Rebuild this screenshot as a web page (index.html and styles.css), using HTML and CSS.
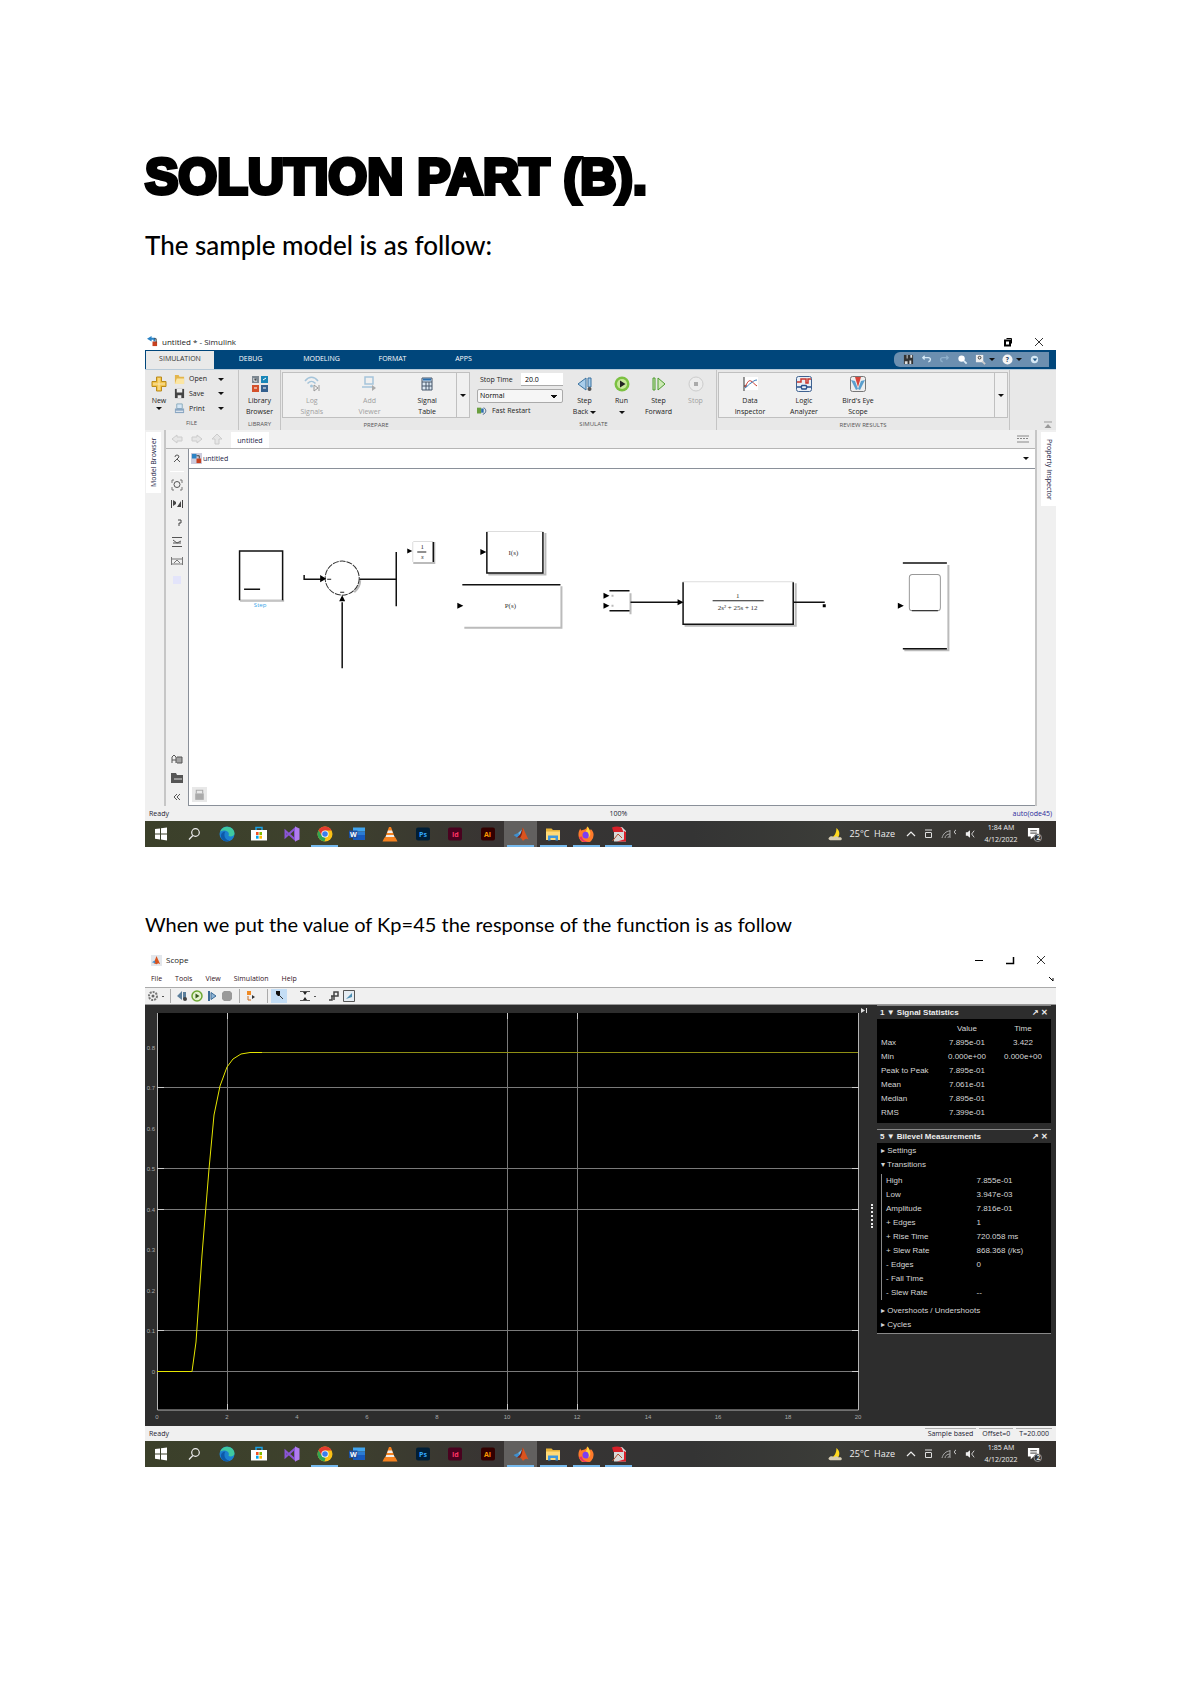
FILE: index.html
```html
<!DOCTYPE html>
<html lang="en">
<head>
    <meta charset="utf-8">
    <title>Solution Part (B)</title>
    <link rel="stylesheet" href="styles.css">
</head>
<body>
    <!-- taskbar icons, shared by both windows -->
    <svg class="sprite" aria-hidden="true">
        <symbol id="i-start" viewBox="0 0 16 16"><path fill="#fff" d="M2 3l5-.6v5H2zM8 2.3l6-.8v6H8zM2 8.4h5v5L2 12.800zM8 8.400h6v6l-6-.8z"/></symbol>
        <symbol id="i-search" viewBox="0 0 16 16"><g fill="none" stroke="#eee" stroke-width="1.200"><circle cx="9.500" cy="6.500" r="3.800"/><path d="M6.800 9.500L3 13.500"/></g></symbol>
        <symbol id="i-edge" viewBox="0 0 16 16"><circle cx="8" cy="8" r="7.500" fill="#1b7fd0"/><path fill="#3fc9a0" d="M1 6C2.500 1.500 7-.2 11 1.300c3.500 1.300 5 5 4.300 7.200C14.500 10.500 11 11 9.500 9.800 11 6.500 8 4.500 5.500 4.500 3.500 4.500 2 5 1 6z"/><path fill="#0e5aa8" d="M5.500 8c-.5 3 1.500 6 5 6.500C6 17 1.500 13.500 2 9c.5-2 2-3.500 4.500-3.500C6 6 5.600 7 5.500 8z"/></symbol>
        <symbol id="i-store" viewBox="0 0 16 16"><path fill="none" stroke="#1ba1e2" stroke-width="1.500" d="M5 4V1.500h6V4"/><path fill="#fff" d="M0 4h16v10.500H0z"/><path fill="#f25022" d="M5 6h2.600v3H5z"/><path fill="#7fba00" d="M8.400 6H11v3H8.400z"/><path fill="#00a4ef" d="M5 9.700h2.600v3H5z"/><path fill="#ffb900" d="M8.400 9.700H11v3H8.400z"/></symbol>
        <symbol id="i-vs" viewBox="0 0 16 16"><path fill="none" stroke="#8a55d6" stroke-width="2" d="M1.500 5v6L11 2.500v11z"/><path fill="#b07cf0" d="M11 .5l4.500 2v11l-4.500 2z"/></symbol>
        <symbol id="i-chrome" viewBox="0 0 16 16"><circle cx="8" cy="8" r="7.500" fill="#fbc116"/><path fill="#e33b2e" d="M1.500 4.300A7.500 7.500 0 0 1 14.600 4.500L8 4.600 4.800 9.500z"/><path fill="#31a552" d="M1.500 4.300L5 10l3.500 2L7.500 15.500A7.500 7.500 0 0 1 1.500 4.300z"/><circle cx="8" cy="8" r="3.600" fill="#fff"/><circle cx="8" cy="8" r="2.800" fill="#3b7ded"/></symbol>
        <symbol id="i-word" viewBox="0 0 16 16"><path fill="#41a5ee" d="M4 1.500h12v4H4z"/><path fill="#2b7cd3" d="M4 5.500h12v3.500H4z"/><path fill="#185abd" d="M4 9h12v5H4z"/><path fill="#1c4f9f" d="M0 4.500h8.500v7.500H0z"/><text x="1" y="10.500" class="glyph" fill="#fff">W</text></symbol>
        <symbol id="i-vlc" viewBox="0 0 16 16"><path fill="#f58220" d="M7 1h2l4 11H3z"/><path fill="#eee" d="M6 4.500h4l.9 2.500H5.100zM4.300 9h7.400l.8 2H3.600z"/><path fill="#f58220" d="M2.500 11.500h11l2 4H.5z"/></symbol>
        <symbol id="i-ps" viewBox="0 0 16 16"><rect x="1" y="1.500" width="14" height="13" rx="2" fill="#001e36"/><text x="4" y="11" class="glyph" fill="#31a8ff">Ps</text></symbol>
        <symbol id="i-id" viewBox="0 0 16 16"><rect x="1" y="1.500" width="14" height="13" rx="2" fill="#49021f"/><text x="5" y="11" class="glyph" fill="#ff3366">Id</text></symbol>
        <symbol id="i-ai" viewBox="0 0 16 16"><rect x="1" y="1.500" width="14" height="13" rx="2" fill="#330000"/><text x="4" y="11" class="glyph" fill="#ff9a00">Ai</text></symbol>
        <symbol id="i-matlab" viewBox="0 0 16 16"><path fill="#3f8fcf" d="M.5 9l4.500-2 2 2.500-3 2z"/><path fill="#6fb8e8" d="M5 7l4-3.500-2 6z"/><path fill="#d9531e" d="M9.500 1.500C11.500 4 13.500 10 15.500 13.500c-2-1.500-3.500-1-5.500 1.500-1-2-2-3-3-3.500 1.500-3 2-6 2.500-10z"/><path fill="#7e1f10" d="M9.500 1.500C9 6 7.500 9 4 11.500l3 .3C9 9.500 9.500 6 9.500 1.500z"/></symbol>
        <symbol id="i-folder" viewBox="0 0 16 16"><path fill="#e8b33a" d="M1 2.500h5.500L8 4h7v10H1z"/><path fill="#ffd978" d="M1 5.500h14V14H1z"/><path fill="#3f97dd" d="M3 9.500h10V14.500h-2.500V12h-5v2.500H3z"/></symbol>
        <symbol id="i-firefox" viewBox="0 0 16 16"><path fill="#ff7a2b" d="M9 .5c2 1.500 2.500 3 2.700 4 .8-.3 1-.9 1-1.500C15 5 15.800 7 15.500 9.500a7.500 7.500 0 0 1-15 0C.3 6.500 1 4.500 2.500 2.500c0 1 .3 1.500.8 2C5 3.500 8.500 4 9 .5z"/><circle cx="8" cy="9" r="3.500" fill="#7b3ff2"/><path fill="#ffd43c" d="M9 .5c2 1.500 2.500 3 2.700 4C13 8 12 11 10 12c2-3 0-6.500-2.500-6.500C9 4 9.500 2.500 9 .5z"/><path fill="#e8336b" d="M1 11c1.500 4 5.500 6 9.500 4.500C7 15.500 4.500 14 4 10.500z"/></symbol>
        <symbol id="i-pdf" viewBox="0 0 16 16"><path fill="#d9d9d9" d="M3 1h8l4 4v10.500H3z"/><path fill="#d8202a" d="M1 1.500q5-2 9.500 0l2 4.500H2.500zM13 5l2 1v9.500H6l7-2z"/><path fill="none" stroke="#b5502d" d="M1.500 15L7 8l4 4"/></symbol>
        <symbol id="i-moon" viewBox="0 0 16 16"><path fill="#ffd91f" d="M9 1c4 3 4 8 1 11H2C7 10.500 9 6 9 1z"/><path fill="#d6ccb2" d="M1 11.500C3 9 5 10 6 11c2-2 4-1 5 0h2c2 0 2.500 3 .5 3H2.500C.5 14 0 12 1 11.500z"/></symbol>
        <symbol id="i-up" viewBox="0 0 10 10"><path fill="none" stroke="#eee" stroke-width="1.200" d="M1 7l4-4 4 4"/></symbol>
        <symbol id="i-meet" viewBox="0 0 10 10"><path fill="none" stroke="#ddd" d="M2 1h7M8.500 4v4.500h-6V3.500h6"/></symbol>
        <symbol id="i-wifi" viewBox="0 0 16 10"><path fill="none" stroke="#aaa" d="M1 9C2 5 5 2 9 2M4 9c0-2 2-4 5-4M7 9c0-1 1-2 2-2M9 1v8"/><path fill="none" stroke="#eee" d="M15 1c-2 1-2 3 0 4"/></symbol>
        <symbol id="i-sound" viewBox="0 0 12 10"><path fill="#eee" d="M1 3h2l3-2.500v9L3 7H1z"/><path fill="none" stroke="#eee" d="M11 1L8 5l3 4"/></symbol>
        <symbol id="i-note" viewBox="0 0 16 16"><path fill="#fff" d="M1 1h12v9H7l-3 3v-3H1z"/><path stroke="#333" d="M3.500 4h7M3.500 6.500h7"/><circle cx="11.500" cy="11.500" r="4" fill="#333" stroke="#999"/><text x="10" y="14" class="glyph" fill="#ddd">2</text></symbol>
    </svg>

    <main class="page">
        <h1>SOLUTION PART (B).</h1>
        <p class="lead">The sample model is as follow:</p>

        <section class="window model">
            <header class="titlebar">
                <svg class="icon12" viewBox="0 0 12 12"><path fill="#2b84c6" d="M0 3l5-3v2h4v4H7V4H5v2z"/><path fill="#c8401e" d="M6 6h5v5H6z"/><path fill="none" stroke="#333" d="M8 3h2v4"/></svg>
                <span>untitled * - Simulink</span>
                <span class="winbtns">
                    <button aria-label="Restore"><svg viewBox="0 0 10 10"><path fill="none" stroke="#000" stroke-width="2" d="M2 3.500h5v5H2z"/><path fill="none" stroke="#000" d="M3.500 1.500h5v5"/></svg></button>
                    <button aria-label="Close"><svg viewBox="0 0 10 10"><path stroke="#333" d="M1 1l8 8M9 1L1 9"/></svg></button>
                </span>
            </header>

            <nav class="tabs">
                <a href="#" class="active">SIMULATION</a>
                <a href="#">DEBUG</a>
                <a href="#">MODELING</a>
                <a href="#">FORMAT</a>
                <a href="#">APPS</a>
                <span class="quick">
                    <svg viewBox="0 0 12 12"><path fill="#333" d="M1 1h10v10H1z"/><path fill="#ddd" d="M4 1h1v4H4zM8 1h2v3H8zM2 8h3v3H2zM7 7h2v4H7z"/></svg>
                    <svg viewBox="0 0 12 12"><path fill="none" stroke="#d5e8f5" stroke-width="1.500" d="M4 2L2 4l2 2M2 4h6c3 0 3 4 0 4.500"/></svg>
                    <svg viewBox="0 0 12 12"><path fill="none" stroke="#8fb0cc" stroke-width="1.500" d="M8 2l2 2-2 2M10 4H4C1 4 1 8 4 8.500"/></svg>
                    <svg viewBox="0 0 12 12"><circle cx="5" cy="5" r="3.500" fill="#fff"/><path stroke="#dcebf5" stroke-width="2" d="M7.500 7.500l3 3"/></svg>
                    <svg viewBox="0 0 12 12"><path fill="#eee" d="M1 1h8v8H1z"/><circle cx="5" cy="4" r="1.500" fill="none" stroke="#333"/><path stroke="#ccc" stroke-width="2" d="M8 8l3 3"/></svg>
                    <i class="caret"></i>
                    <svg viewBox="0 0 12 12"><circle cx="6" cy="6" r="5.500" fill="#f5f5f5"/><text x="4" y="9" class="glyph" fill="#235">?</text></svg>
                    <i class="caret"></i>
                    <svg viewBox="0 0 12 12"><circle cx="6" cy="6" r="4" fill="#d5e8f5"/><path fill="#1d5484" d="M4 5h5L6.500 8z"/></svg>
                </span>
            </nav>

            <div class="ribbon">
                <div class="group file">
                    <div class="tools">
                        <button class="tool"><svg viewBox="0 0 16 16"><path fill="#f3c54b" stroke="#b98a1c" d="M5.500 1h5v4.500H15v5h-4.500V15h-5v-4.500H1v-5h4.500z"/><path stroke="#fff" d="M8 2v12M2 8h12" opacity=".6"/></svg>New<i class="caret"></i></button>
                        <div class="list">
                            <button><svg viewBox="0 0 12 12"><path fill="#e3b54c" d="M1 1h4l1 2h5v8H1z"/><path fill="#fbe6a4" d="M3 5h8v6H1z"/></svg>Open<i class="caret"></i></button>
                            <button><svg viewBox="0 0 12 12"><path fill="#444" d="M1 1h10v10H1z"/><path fill="#eee" d="M3 1h6v4H3zM4 8h4v3H4z"/></svg>Save<i class="caret"></i></button>
                            <button><svg viewBox="0 0 12 12"><path fill="#d5e6f5" stroke="#8ab" d="M3 1h6v5H3z"/><path fill="#8aa6c2" d="M1 6h10v5H1z"/><path stroke="#fff" d="M2 9h8"/></svg>Print<i class="caret"></i></button>
                        </div>
                    </div>
                    <small>FILE</small>
                </div>
                <div class="group library">
                    <div class="tools">
                        <button class="tool"><svg viewBox="0 0 16 16"><path fill="#7d8891" d="M0 0h7v7H0z"/><path fill="#1886b8" d="M9 0h7v7H9z"/><path fill="#d4502a" d="M0 9h7v7H0z"/><path fill="#35618f" d="M9 9h7v7H9z"/><path stroke="#fff" d="M2 2v3h3M2 12h3M11 12h3M11 4l3-2"/></svg>Library<br>Browser</button>
                    </div>
                    <small>LIBRARY</small>
                </div>
                <div class="group prepare">
                    <div class="tools gallery">
                        <button class="tool off"><svg viewBox="0 0 16 16"><path fill="none" stroke="#a5c4da" stroke-width="1.500" d="M1 5c4-5 9-5 13 0M3.500 7.500c3-3 5-3 8 0"/><circle cx="7.500" cy="10" r="1.500" fill="#a5c4da"/><path stroke="#999" fill="none" d="M10 9v6l4-3-4-3M15 9v6"/></svg>Log<br>Signals</button>
                        <button class="tool off"><svg viewBox="0 0 16 16"><path fill="none" stroke="#a5c4da" stroke-width="1.500" d="M3 1h8v7H3zM0 11h10"/><path fill="#aaa" d="M10 9v6l4-3z"/></svg>Add<br>Viewer</button>
                        <button class="tool"><svg viewBox="0 0 16 16"><path fill="#dbe7f1" stroke="#46566a" d="M3 2h10v12H3z"/><path stroke="#46566a" d="M3 6h10M3 10h10M7 6v8M10 6v8"/><path stroke="#2b6fae" stroke-width="2" d="M4 3.500h8"/></svg>Signal<br>Table</button>
                        <button class="more" aria-label="More"><i class="caret"></i></button>
                    </div>
                    <small>PREPARE</small>
                </div>
                <div class="group simulate">
                    <div class="tools">
                        <div class="fields">
                            <label>Stop Time <input type="text" value="20.0"></label>
                            <select aria-label="Simulation mode"><option>Normal</option></select>
                            <button class="fast"><svg viewBox="0 0 12 12"><path fill="#6a9f3f" d="M0 2h5v7H0z"/><path fill="#2b6fae" d="M5 3h3v5H5z"/><path fill="none" stroke="#2b4f7a" d="M8 2c4 2 3 7-1 8"/></svg>Fast Restart</button>
                        </div>
                        <button class="tool"><svg viewBox="0 0 16 16"><path fill="#a9cdea" stroke="#39719f" d="M9 2v12L1 8zM11 2h3v9h-3z"/><circle cx="12.500" cy="13" r="2" fill="#555"/></svg>Step<br>Back <i class="caret"></i></button>
                        <button class="tool"><svg viewBox="0 0 16 16"><circle cx="8" cy="8" r="7.500" fill="#7cc142"/><circle cx="8" cy="8" r="5" fill="#c8e89a"/><path fill="#222" d="M6 4.500v7L11.500 8z"/></svg>Run<br><i class="caret"></i></button>
                        <button class="tool"><svg viewBox="0 0 16 16"><path fill="#cdeab5" stroke="#4d9a2f" d="M2 2h2v12H2zM7 2l7 6-7 6z"/></svg>Step<br>Forward</button>
                        <button class="tool off"><svg viewBox="0 0 16 16"><circle cx="8" cy="8" r="7" fill="#ececec" stroke="#ccc"/><path fill="#aaa" d="M6 6h4v4H6z"/></svg>Stop</button>
                    </div>
                    <small>SIMULATE</small>
                </div>
                <div class="group review">
                    <div class="tools gallery">
                        <button class="tool"><svg viewBox="0 0 16 16"><path fill="#fff" d="M2 1h14v13H2z"/><path fill="none" stroke="#333" d="M2 1v14M2 10h3"/><path fill="none" stroke="#c9372c" d="M3 11c3-6 4-7 6-6s3 3 6 5"/><path fill="none" stroke="#3478b8" d="M3 12c3-2 4-4 6-5s3-3 6-3"/></svg>Data<br>Inspector</button>
                        <button class="tool"><svg viewBox="0 0 16 16"><rect x=".5" y=".5" width="15" height="15" rx="2" fill="#e9eff6" stroke="#3f6290"/><path fill="none" stroke="#c9372c" stroke-width="1.500" d="M1 6h4V3h5v4h2V3h3"/><path fill="none" stroke="#27508c" stroke-width="1.500" d="M1 11h4l1-1.500h4l1 1.500h4M5 11l1 2h4l1-2"/></svg>Logic<br>Analyzer</button>
                        <button class="tool"><svg viewBox="0 0 16 16"><rect x=".5" y=".5" width="15" height="15" rx="2" fill="#eee" stroke="#777"/><path fill="#5a9fce" d="M1 4l4 1 3 8-2 1z"/><path fill="#5a9fce" d="M15 4l-4 1-3 8 2 1z"/><path fill="#d8453a" d="M5 1h6L8 11z"/></svg>Bird's Eye<br>Scope</button>
                        <button class="more" aria-label="More"><i class="caret"></i></button>
                    </div>
                    <small>REVIEW RESULTS</small>
                </div>
                <div class="collapse"><svg viewBox="0 0 8 8"><path stroke="#999" d="M0 1h8"/><path fill="#999" d="M4 3l3.500 4h-7z"/></svg></div>
            </div>

            <div class="workspace">
                <aside class="side"><button>Model Browser</button></aside>
                <div class="editor">
                    <div class="doctabs">
                        <svg viewBox="0 0 12 12"><path class="nav" d="M1 6l5-4v2h5v4H6v2z"/></svg>
                        <svg viewBox="0 0 12 12"><path class="nav" d="M11 6L6 2v2H1v4h5v2z"/></svg>
                        <svg viewBox="0 0 12 12"><path class="nav" d="M6 1l5 5H8v5H4V6H1z"/></svg>
                        <a href="#">untitled</a>
                        <svg class="keys" viewBox="0 0 12 12"><path fill="none" stroke="#888" d="M0 3h12M0 9h12"/><path stroke="#888" stroke-dasharray="2 1" d="M0 5.500h12"/></svg>
                    </div>
                    <div class="columns">
                        <div class="palette">
                            <svg viewBox="0 0 12 12"><path fill="none" stroke="#555" d="M4 5a2 2 0 1 1 4 0L6 7M3 10l3-3 3 3"/></svg>
                            <hr>
                            <svg viewBox="0 0 12 12"><path fill="none" stroke="#777" d="M1 4V1h2M11 4V1H9M1 8v3h2M11 8v3H9"/><circle cx="6" cy="5.500" r="3" fill="none" stroke="#555"/></svg>
                            <svg viewBox="0 0 12 12"><path fill="#444" d="M0 2h1v8H0zM11 2h1v8h-1zM2 2l3 2v2L2 8zM10 3v6H6z"/></svg>
                            <svg viewBox="0 0 12 12"><path fill="none" stroke="#444" d="M7 3h3v3H8v3"/></svg>
                            <svg viewBox="0 0 12 12"><path fill="none" stroke="#555" d="M1 1.500h10M1 10.500h10M2 4l4 3 4-2M2 7h8"/></svg>
                            <svg viewBox="0 0 12 12"><path fill="none" stroke="#777" d="M.5 2v8M11.500 2v8M1 4h10M1 9h10M3 8l3-3 3 3"/></svg>
                            <svg viewBox="0 0 12 12"><path fill="#e3e4fa" d="M2 2h8v8H2z"/></svg>
                            <svg class="bottom" viewBox="0 0 12 12"><path fill="none" stroke="#555" d="M1 10V4l2-2 2 2v6M1 7h4M6 4h5v6H6zM8 4v6M10 4v6"/></svg>
                            <svg viewBox="0 0 12 12"><path fill="#555" d="M0 1h5l1 2h6v8H0z"/><path stroke="#ddd" d="M3 7h8"/></svg>
                            <svg viewBox="0 0 12 12"><path fill="none" stroke="#555" d="M6 3L3 6l3 3M9 3L6 6l3 3"/></svg>
                        </div>
                        <div class="sheet">
                            <div class="crumb">
                                <svg class="icon12" viewBox="0 0 12 12"><path fill="#ccd" d="M0 0h12v12H0z"/><path fill="#2b84c6" d="M1 1h5v5H1z"/><path fill="#c8401e" d="M6 6h5v5H6z"/><path fill="none" stroke="#333" d="M6 3h3v3"/></svg>
                                <span>untitled</span>
                                <i class="caret"></i>
                            </div>
                            <!-- block diagram -->
                            <svg class="diagram" viewBox="189 469 845 336">
                                <g class="shade">
                                    <path d="M240 600.500h44M413 563h21V542M488 574.500h57V533M464 627.500h97V586M631 613h-1V593M684 625.500h111V583M947.500 565v85h-44"/>
                                    <path d="M354 592q6-5 6-12"/>
                                </g>
                                <g class="faint"><path d="M413 541.500h20M412.500 542v20M486 531.500h57M682 581.500h111M239 599.500h44"/></g>
                                <g class="wire">
                                    <path d="M239.500 600v-49h43v49M244 589h16"/>
                                    <path d="M304 575v4h20M359 579h37M396 552v54M342 602v66"/>
                                    <path d="M433 542v20M486.500 532v41h56v-41M462 584.500h98"/>
                                    <path d="M609 590.500h20M609 610.500h20M630 602h50"/>
                                    <path d="M682.500 582v42h110v-42M793 602h31M902 563h44M902 648.500h44"/>
                                </g>
                                <circle class="sum" cx="342" cy="578" r="17"/>
                                <path class="head" d="M320 575l6 3.500-6 3.500zM339 601l3-6 3 6zM407 548.500l5 2.500-5 2.500zM480 549l6 3-6 3zM457 602.500l6 3-6 3zM603 592.500l6 3-6 3zM603 602.500l6 3-6 3zM677 599l6 3-6 3zM897 602.500l6 3-6 3zM822 604h3v3h-3z"/>
                                <path class="thin" d="M327 579h4M340 592h4M417 552h9M712 600.500h51"/>
                                <path class="shade" d="M611 595.500h2M611 605.500h2"/>
                                <rect class="screen" x="908.500" y="574.500" width="31" height="36" rx="3"/>
                                <path class="thin" d="M911 610.500h26"/>
                                <text x="260" y="607" class="blue">Step</text>
                                <text x="422" y="549">1</text>
                                <text x="422" y="559" class="it">s</text>
                                <text x="513" y="555">I(s)</text>
                                <text x="510" y="608">P(s)</text>
                                <text x="737" y="598">1</text>
                                <text x="737" y="610">2s² + 25s + 12</text>
                            </svg>
                            <svg class="lock" viewBox="0 0 14 14"><path fill="#e8e8e8" d="M0 0h14v14H0z"/><path fill="#aaa" d="M3 6h8v6H3z"/><path fill="none" stroke="#aaa" d="M4 6V3h6v3"/></svg>
                        </div>
                    </div>
                </div>
                <aside class="side right"><button>Property Inspector</button></aside>
            </div>

            <footer class="status">
                <span class="state">Ready</span>
                <span>100%</span>
                <a href="#">auto(ode45)</a>
            </footer>

            <div class="taskbar">
                <div class="apps">
                    <button aria-label="Start"><svg><use href="#i-start"/></svg></button>
                    <button aria-label="Search"><svg><use href="#i-search"/></svg></button>
                    <button aria-label="Edge"><svg><use href="#i-edge"/></svg></button>
                    <button aria-label="Store"><svg><use href="#i-store"/></svg></button>
                    <button aria-label="Visual Studio"><svg><use href="#i-vs"/></svg></button>
                    <button aria-label="Chrome" class="open"><svg><use href="#i-chrome"/></svg></button>
                    <button aria-label="Word"><svg><use href="#i-word"/></svg></button>
                    <button aria-label="VLC"><svg><use href="#i-vlc"/></svg></button>
                    <button aria-label="Photoshop"><svg><use href="#i-ps"/></svg></button>
                    <button aria-label="InDesign"><svg><use href="#i-id"/></svg></button>
                    <button aria-label="Illustrator"><svg><use href="#i-ai"/></svg></button>
                    <button aria-label="MATLAB" class="open current"><svg><use href="#i-matlab"/></svg></button>
                    <button aria-label="Explorer" class="open"><svg><use href="#i-folder"/></svg></button>
                    <button aria-label="Firefox" class="open"><svg><use href="#i-firefox"/></svg></button>
                    <button aria-label="PDF reader" class="open"><svg><use href="#i-pdf"/></svg></button>
                </div>
                <div class="tray">
                    <svg class="big"><use href="#i-moon"/></svg>
                    <span class="weather">25°C&nbsp; Haze</span>
                    <svg><use href="#i-up"/></svg>
                    <svg><use href="#i-meet"/></svg>
                    <svg class="wide"><use href="#i-wifi"/></svg>
                    <svg><use href="#i-sound"/></svg>
                    <span class="clock">1:84 AM<br>4/12/2022</span>
                    <svg class="big"><use href="#i-note"/></svg>
                </div>
            </div>
        </section>

        <p class="note">When we put the value of Kp=45 the response of the function is as follow</p>

        <section class="window scope">
            <header class="titlebar">
                <svg class="icon12" viewBox="0 0 12 12"><path fill="#e3e7ec" d="M0 0h12v12H0z"/><path fill="#d9531e" d="M6 1l4 9-2-1-2 1-3-1z"/><path fill="#3f8fcf" d="M1 8l3-2 1 3z"/></svg>
                <span>Scope</span>
                <span class="winbtns">
                    <button aria-label="Minimize"><svg viewBox="0 0 10 10"><path stroke="#000" d="M1 5.500h8"/></svg></button>
                    <button aria-label="Maximize"><svg viewBox="0 0 10 10"><path fill="none" stroke="#000" stroke-width="1.500" d="M1 8.500h7.500V2"/></svg></button>
                    <button aria-label="Close"><svg viewBox="0 0 10 10"><path stroke="#333" d="M1 1l8 8M9 1L1 9"/></svg></button>
                </span>
            </header>
            <nav class="menu">
                <a href="#">File</a><a href="#">Tools</a><a href="#">View</a><a href="#">Simulation</a><a href="#">Help</a>
                <svg viewBox="0 0 6 6"><path fill="none" stroke="#000" d="M1 1l4 4V2"/></svg>
            </nav>
            <div class="toolbar">
                <button aria-label="Settings"><svg viewBox="0 0 12 12"><circle cx="6" cy="6" r="4" fill="none" stroke="#777" stroke-width="2" stroke-dasharray="2 1"/><circle cx="6" cy="6" r="1.500" fill="#666"/></svg></button>
                <i class="dot"></i>
                <i class="sep"></i>
                <button aria-label="Step back"><svg viewBox="0 0 12 12"><path fill="#5c7f9c" d="M6 1v9L1 6zM7 2h3v7H7z"/><circle cx="9" cy="9" r="2" fill="#444"/></svg></button>
                <button aria-label="Run"><svg viewBox="0 0 12 12"><circle cx="6" cy="6" r="5" fill="#e5f3d1" stroke="#6ea834" stroke-width="1.500"/><path fill="#395a1e" d="M4.500 3.500v5l4-2.500z"/></svg></button>
                <button aria-label="Step forward"><svg viewBox="0 0 12 12"><path fill="#3c6b96" d="M2 1h2v10H2z"/><path fill="#8db4d6" stroke="#3c6b96" d="M5 2.500v7L10 6z"/></svg></button>
                <button aria-label="Stop"><svg viewBox="0 0 12 12"><path fill="#999" d="M3 1h6l2 2v6l-2 2H3L1 9V3z"/></svg></button>
                <i class="sep"></i>
                <button aria-label="Highlight"><svg viewBox="0 0 12 12"><path fill="#f08a24" d="M2 1h4v4H2z"/><path fill="#333" d="M7 5l3 2-3 2z"/><path fill="none" stroke="#c96a1e" d="M3 6v4h3"/></svg></button>
                <i class="sep wide"></i>
                <button class="on" aria-label="Cursor"><svg viewBox="0 0 12 12"><path fill="#111" d="M3 1h4v5H5L3 4z"/><path stroke="#333" d="M6 5l4 4"/></svg></button>
                <i class="gap"></i>
                <button aria-label="Scale"><svg viewBox="0 0 12 12"><path stroke="#555" fill="none" d="M1 1.500h10M1 10.500h10"/><path fill="#222" d="M4 2h4L6 5zM4 10h4L6 7z"/></svg></button>
                <i class="dot"></i>
                <i class="gap"></i>
                <button aria-label="Trigger"><svg viewBox="0 0 12 12"><path fill="none" stroke="#444" stroke-width="1.500" d="M1 10h3V6h6V2H6v8M3 6h3"/></svg></button>
                <button aria-label="Measurements"><svg viewBox="0 0 12 12"><path fill="#e6edf3" stroke="#555" d="M.5 .5h11v11H.5z"/><path fill="#4d8fb3" d="M3 9l6-6v4z"/></svg></button>
            </div>

            <div class="scope-body">
                <!-- step response plot -->
                <svg class="plot" viewBox="145 1006 726 421">
                    <path fill="#000" d="M157 1014h702v397H157z"/>
                    <path class="grid" d="M227.500 1014v397M507.500 1014v397M577.500 1014v397M157 1088.500h702M157 1169.500h702M157 1210.500h702M157 1331.500h702M157 1372.500h702"/>
                    <path class="axis" d="M157.500 1014v397h701v-397"/>
                    <path class="tick" d="M227.500 1014v6M507.500 1014v6M577.500 1014v6M227.500 1411v-6M507.500 1411v-6M577.500 1411v-6M157 1088.500h7M157 1169.500h7M157 1210.500h7M157 1331.500h7M157 1372.500h7M859 1088.500h-7M859 1169.500h-7M859 1210.500h-7M859 1331.500h-7M859 1372.500h-7"/>
                    <path class="flat" d="M262 1053.500h596"/>
                    <path class="curve" d="M157 1372.500H192L196 1343 202 1256 209 1170 214 1116 220 1087 227 1068 233 1060 241 1055 250 1053.500H262"/>
                    <g class="ylabels">
                        <text x="155" y="1051">0.8</text><text x="155" y="1091">0.7</text><text x="155" y="1132">0.6</text>
                        <text x="155" y="1172">0.5</text><text x="155" y="1213">0.4</text><text x="155" y="1253">0.3</text>
                        <text x="155" y="1294">0.2</text><text x="155" y="1334">0.1</text><text x="155" y="1375">0</text>
                    </g>
                    <g class="xlabels">
                        <text x="157" y="1420">0</text><text x="227" y="1420">2</text><text x="297" y="1420">4</text>
                        <text x="367" y="1420">6</text><text x="437" y="1420">8</text><text x="507" y="1420">10</text>
                        <text x="577" y="1420">12</text><text x="648" y="1420">14</text><text x="718" y="1420">16</text>
                        <text x="788" y="1420">18</text><text x="858" y="1420">20</text>
                    </g>
                    <path fill="#ddd" d="M861 1009l4 2.500-4 2.500zM866 1009h1v5h-1z"/>
                </svg>
                <div class="splitter"></div>
                <aside class="stats">
                    <h2><span>1 ▼ Signal Statistics</span><span>↗ ✕</span></h2>
                    <table>
                        <tr><td></td><th>Value</th><th>Time</th></tr>
                        <tr><td>Max</td><td>7.895e-01</td><td>3.422</td></tr>
                        <tr><td>Min</td><td>0.000e+00</td><td>0.000e+00</td></tr>
                        <tr><td>Peak to Peak</td><td>7.895e-01</td><td></td></tr>
                        <tr><td>Mean</td><td>7.061e-01</td><td></td></tr>
                        <tr><td>Median</td><td>7.895e-01</td><td></td></tr>
                        <tr><td>RMS</td><td>7.399e-01</td><td></td></tr>
                    </table>
                    <h2><span>5 ▼ Bilevel Measurements</span><span>↗ ✕</span></h2>
                    <div class="bilevel">
                        <p>▸ Settings</p>
                        <p>▾ Transitions</p>
                        <table>
                            <tr><td>High</td><td>7.855e-01</td></tr>
                            <tr><td>Low</td><td>3.947e-03</td></tr>
                            <tr><td>Amplitude</td><td>7.816e-01</td></tr>
                            <tr><td>+ Edges</td><td>1</td></tr>
                            <tr><td>+ Rise Time</td><td>720.058 ms</td></tr>
                            <tr><td>+ Slew Rate</td><td>868.368 (/ks)</td></tr>
                            <tr><td>- Edges</td><td>0</td></tr>
                            <tr><td>- Fall Time</td><td></td></tr>
                            <tr><td>- Slew Rate</td><td>--</td></tr>
                        </table>
                        <p>▸ Overshoots / Undershoots</p>
                        <p>▸ Cycles</p>
                    </div>
                </aside>
            </div>

            <footer class="status">
                <span>Ready</span>
                <span class="cells"><span>Sample based</span><span>Offset=0</span><span>T=20.000</span></span>
            </footer>

            <div class="taskbar">
                <div class="apps">
                    <button aria-label="Start"><svg><use href="#i-start"/></svg></button>
                    <button aria-label="Search"><svg><use href="#i-search"/></svg></button>
                    <button aria-label="Edge"><svg><use href="#i-edge"/></svg></button>
                    <button aria-label="Store"><svg><use href="#i-store"/></svg></button>
                    <button aria-label="Visual Studio"><svg><use href="#i-vs"/></svg></button>
                    <button aria-label="Chrome" class="open"><svg><use href="#i-chrome"/></svg></button>
                    <button aria-label="Word"><svg><use href="#i-word"/></svg></button>
                    <button aria-label="VLC"><svg><use href="#i-vlc"/></svg></button>
                    <button aria-label="Photoshop"><svg><use href="#i-ps"/></svg></button>
                    <button aria-label="InDesign"><svg><use href="#i-id"/></svg></button>
                    <button aria-label="Illustrator"><svg><use href="#i-ai"/></svg></button>
                    <button aria-label="MATLAB" class="open current"><svg><use href="#i-matlab"/></svg></button>
                    <button aria-label="Explorer" class="open"><svg><use href="#i-folder"/></svg></button>
                    <button aria-label="Firefox" class="open"><svg><use href="#i-firefox"/></svg></button>
                    <button aria-label="PDF reader" class="open"><svg><use href="#i-pdf"/></svg></button>
                </div>
                <div class="tray">
                    <svg class="big"><use href="#i-moon"/></svg>
                    <span class="weather">25°C&nbsp; Haze</span>
                    <svg><use href="#i-up"/></svg>
                    <svg><use href="#i-meet"/></svg>
                    <svg class="wide"><use href="#i-wifi"/></svg>
                    <svg><use href="#i-sound"/></svg>
                    <span class="clock">1:85 AM<br>4/12/2022</span>
                    <svg class="big"><use href="#i-note"/></svg>
                </div>
            </div>
        </section>
    </main>
</body>
</html>
```

FILE: styles.css
```css
* {
    box-sizing: border-box;
}
body {
    margin: 0;
    background: #fff;
    color: #000;
    font-family: Lato, "Open Sans", sans-serif;
}
.page {
    padding: 149px 144px 230px 145px;
}
h1 {
    margin: 0;
    font: bold 50px/56px "Liberation Sans", Arial, sans-serif;
    -webkit-text-stroke: 4px #000;
}
.lead {
    margin: 24px 0 72px;
    font-size: 26px;
    line-height: 32px;
    font-weight: 500;
}
.note {
    margin: 65px 0 14px;
    font-size: 20px;
    line-height: 24px;
}
.sprite {
    display: none;
}
.glyph {
    font: bold 7px "Open Sans", sans-serif;
}



/* windows */
.window {
    font: 7px/10px "Open Sans", sans-serif;
}
.window button {
    border: none;
    padding: 0;
    margin: 0;
    background: none;
    color: inherit;
    font: inherit;
    cursor: pointer;
}
.window a {
    color: inherit;
    text-decoration: none;
}
.window svg {
    display: block;
}
.titlebar {
    display: flex;
    align-items: center;
    gap: 4px;
    height: 17px;
    padding: 0 12px 0 2px;
    font-size: 8px;
    color: #222;
}
.icon12 {
    width: 11px;
    height: 11px;
}
.winbtns {
    display: flex;
    gap: 21px;
    margin-left: auto;
}
.winbtns svg {
    width: 10px;
    height: 10px;
}
.caret {
    display: inline-block;
    border: 3px solid transparent;
    border-top-color: #111;
    border-bottom: none;
}



/* blue tab row */
.tabs {
    display: flex;
    align-items: stretch;
    height: 20px;
    background: #00467b;
    border-bottom: 1px solid #b8cad8;
    color: #fff;
}
.tabs a {
    width: 71px;
    line-height: 17px;
    text-align: center;
}
.tabs .active {
    background: #e9e9e9;
    color: #333;
    margin: 1px 1px 0 1px;
    width: 68px;
    line-height: 15px;
}
.quick {
    display: flex;
    align-items: center;
    gap: 7px;
    margin: 2px 7px 2px auto;
    padding: 0 9px 0 9px;
    background: #6c8fb0;
    border-radius: 6px 0 0 6px;
}
.quick svg {
    width: 11px;
    height: 11px;
}
.quick .caret {
    margin-left: -4px;
}



/* ribbon */
.ribbon {
    display: flex;
    height: 60px;
    background: #e8e8e8;
    color: #222;
}
.group {
    display: flex;
    flex-direction: column;
    border-right: 1px solid #c4c4c4;
    padding: 2px 1px 0;
}
.group small {
    font-size: 6px;
    line-height: 14px;
    text-align: center;
    color: #555;
}
.tools {
    display: flex;
    height: 46px;
}
.file {width: 94px;}
.library {width: 42px;}
.prepare {width: 190px; border-right: none;}
.simulate {width: 246px;}
.review {flex: 1;}
.window .tool {
    flex: 1;
    padding-top: 4px;
    font-size: 7px;
    line-height: 11px;
    align-self: flex-start;
}
.tool svg {
    width: 16px;
    height: 16px;
    margin: 0 auto 3px;
}
.file .tool {
    flex: none;
    width: 26px;
}
.file .tool .caret {
    display: block;
    width: 0;
    margin: 1px auto;
}
.window .off {
    color: #a0a0a0;
}
.list {
    display: flex;
    flex-direction: column;
    justify-content: space-around;
    flex: 1;
    padding-left: 2px;
}
.list button {
    display: flex;
    align-items: center;
    gap: 4px;
    width: 50px;
}
.list svg {
    width: 11px;
    height: 11px;
}
.list .caret {
    margin-left: auto;
}
.gallery {
    border: 1px solid #c0c0c0;
    background: #f0f0f0;
}
.gallery .tool {
    padding-top: 3px;
}
.window .more {
    width: 13px;
    border-left: 1px solid #c0c0c0;
    margin-left: auto;
}
.review .tool {
    flex: none;
    width: 54px;
}
.review .tool:first-child {
    margin-left: 4px;
}
.fields {
    display: flex;
    flex-direction: column;
    gap: 3px;
    width: 94px;
    padding: 1px 3px 0 5px;
}
.fields label {
    display: flex;
    align-items: center;
    justify-content: space-between;
    padding-left: 3px;
}
.fields input {
    width: 42px;
    height: 13px;
    border: none;
    border-bottom: 1px solid #aaa;
    padding: 0 4px;
    font: inherit;
}
.fields select {
    appearance: none;
    height: 14px;
    border: 1px solid #aaa;
    border-radius: 2px;
    padding: 0 2px;
    background:
        linear-gradient(45deg, transparent 50%, #111 50%) right 8px center / 3px 3px no-repeat,
        linear-gradient(-45deg, transparent 50%, #111 50%) right 5px center / 3px 3px no-repeat,
        #f6f6f6;
    font: inherit;
}
.window .fast {
    display: flex;
    align-items: center;
    gap: 5px;
}
.fast svg {
    width: 10px;
    height: 10px;
}
.simulate .tool {
    width: 37px;
    flex: none;
}
.collapse {
    display: flex;
    width: 46px;
    align-items: flex-end;
    justify-content: flex-end;
    padding: 1px 4px;
}
.collapse svg {
    width: 8px;
    height: 8px;
}



/* editor */
.workspace {
    display: flex;
    background: #f0f0f0;
}
.side {
    width: 21px;
    padding: 2px 3px 0 1px;
    border-right: 2px solid #c6c6c6;
}
.side button {
    writing-mode: vertical-rl;
    transform: rotate(180deg);
    width: 15px;
    height: 61px;
    background: #fff;
    color: #224;
}
.side.right {
    border-right: none;
    border-left: 2px solid #c6c6c6;
    padding: 2px 1px 0 4px;
}
.side.right button {
    transform: none;
    height: 74px;
}
.editor {
    flex: 1;
    min-width: 0;
}
.doctabs {
    display: flex;
    align-items: center;
    gap: 8px;
    height: 19px;
    padding: 0 6px 0 5px;
    border-bottom: 1px solid #b5b5b5;
}
.doctabs svg {
    width: 12px;
    height: 12px;
}
.doctabs a {
    align-self: flex-end;
    width: 38px;
    height: 16px;
    line-height: 17px;
    background: #fff;
    text-align: center;
    color: #224;
}
.doctabs .keys {
    margin-left: auto;
}
.nav {
    fill: #e6e6e6;
    stroke: #ccc;
}
.columns {
    display: flex;
}
.palette {
    display: flex;
    flex-direction: column;
    align-items: center;
    gap: 7px;
    width: 22px;
    padding: 3px 0;
}
.palette svg {
    width: 12px;
    height: 12px;
}
.palette hr {
    width: 14px;
    margin: 0;
    border: none;
    border-top: 1px solid #fff;
}
.palette .bottom {
    margin-top: auto;
}
.sheet {
    position: relative;
    flex: 1;
    min-width: 0;
    background: #fff;
    border: 1px solid #8a9099;
    border-top: none;
    border-right: none;
}
.crumb {
    display: flex;
    align-items: center;
    gap: 1px;
    height: 20px;
    padding: 0 6px 0 2px;
    border-bottom: 1px solid #8a9099;
    color: #224;
}
.crumb .caret {
    margin-left: auto;
}
.diagram {
    width: 100%;
}
.diagram text {
    font: 7px "Liberation Serif", serif;
    fill: #333;
    text-anchor: middle;
}
.diagram .blue {
    font: 6px "Open Sans", sans-serif;
    fill: #35a3e8;
}
.diagram .it {
    font-style: italic;
}
.wire {
    fill: none;
    stroke: #111;
    stroke-width: 1.500;
}
.shade {
    fill: none;
    stroke: #bbb;
    stroke-width: 2;
}
.faint {
    fill: none;
    stroke: #ddd;
}
.thin {
    fill: none;
    stroke: #222;
}
.sum {
    fill: #fff;
    stroke: #333;
    stroke-dasharray: 6 1;
}
.head {
    fill: #000;
}
.screen {
    fill: #fff;
    stroke: #999;
}
.lock {
    position: absolute;
    left: 3px;
    bottom: 3px;
    width: 15px;
    height: 15px;
}
.status {
    display: flex;
    align-items: center;
    justify-content: space-between;
    height: 15px;
    padding: 0 4px;
    background: #f0f0f0;
    color: #223;
}
.state {
    width: 51%;
}
.window .status a {
    color: #2a2a9a;
    margin-left: auto;
}



/* taskbar */
.taskbar {
    display: flex;
    justify-content: space-between;
    height: 26px;
    background: linear-gradient(to right, #3b402a 0%, #3e412d 20%, #383433 38%, #343434 60%, #3b3c38 75%, #35312e 100%);
    color: #eee;
}
.apps {
    display: flex;
    width: 490px;
}
.taskbar .apps button {
    flex: 1 1 0;
    min-width: 0;
    display: flex;
    align-items: center;
    justify-content: center;
}
.apps svg {
    width: 16px;
    height: 16px;
}
.taskbar .apps .open {
    background: linear-gradient(#76b9ed, #76b9ed) bottom center / 27px 2px no-repeat;
}
.taskbar .apps .current {
    background-color: #62605f;
}
.tray {
    display: flex;
    align-items: center;
    gap: 7px;
    padding-right: 14px;
    font-size: 9px;
}
.tray svg {
    width: 10px;
    height: 10px;
}
.tray .big {
    width: 15px;
    height: 15px;
}
.tray .wide {
    width: 18px;
}
.weather {
    margin-right: 4px;
}
.clock {
    font-size: 7px;
    line-height: 12px;
    text-align: center;
    width: 38px;
}



/* scope window */
.scope .titlebar {
    height: 20px;
    padding: 0 10px 0 6px;
}
.menu {
    display: flex;
    align-items: center;
    gap: 13px;
    height: 17px;
    padding: 0 2px 0 6px;
    color: #312;
}
.menu svg {
    width: 6px;
    height: 6px;
    margin-left: auto;
}
.toolbar {
    display: flex;
    align-items: center;
    gap: 3px;
    height: 18px;
    padding: 0 2px;
    background: #f0f0f0;
    border-top: 1px solid #aaa;
    border-bottom: 1px solid #999;
}
.toolbar svg {
    width: 12px;
    height: 12px;
}
.window .on {
    background: #c3ddf5;
    padding: 1px 2px;
}
.dot {
    width: 2px;
    height: 1px;
    background: #555;
}
.sep {
    width: 1px;
    height: 14px;
    margin: 0 2px 0 3px;
    background: #aaa;
}
.sep.wide {
    margin-left: 7px;
    margin-right: 0;
}
.gap {
    width: 6px;
}
.scope-body {
    display: flex;
    background: #2d2d2d;
    color: #d5d5d5;
}
.plot {
    flex: 1;
    min-width: 0;
}
.plot text {
    font: 6px "Liberation Sans", sans-serif;
    fill: #aaa;
}
.ylabels {
    text-anchor: end;
}
.xlabels {
    text-anchor: middle;
}
.grid {
    stroke: #7a7a7a;
}
.axis {
    fill: none;
    stroke: #b5b5b5;
}
.tick {
    stroke: #ccc;
}
.curve {
    fill: none;
    stroke: #e6e600;
}
.flat {
    stroke: #8f8f14;
}
.splitter {
    align-self: center;
    width: 6px;
    height: 24px;
    border-left: 2px dotted #eee;
}
.stats {
    width: 179px;
    padding-right: 5px;
}
.stats h2 {
    display: flex;
    justify-content: space-between;
    margin: 0;
    padding: 0 3px;
    font: bold 8px/13px "Liberation Sans", sans-serif;
    border-top: 1px solid #888;
    color: #eee;
}
.stats table {
    width: 100%;
    border-collapse: collapse;
    background: #000;
    font: 8px/14px "Liberation Sans", sans-serif;
}
.stats td, .stats th {
    padding: 0;
    font-weight: normal;
    text-align: center;
}
.stats td:first-child {
    padding-left: 4px;
    text-align: left;
    width: 62px;
}
.stats > table {
    margin-bottom: 6px;
    border: solid #000;
    border-width: 3px 0;
}
.bilevel {
    padding: 1px 4px;
    background: #000;
    border-bottom: 1px solid #888;
    font: 8px/14px "Liberation Sans", sans-serif;
}
.bilevel p {
    margin: 0;
}
.bilevel table {
    margin: 2px 0 4px;
    border-left: 1px solid #888;
}
.bilevel td:first-child {
    width: 95px;
}
.bilevel td {
    text-align: left;
}
.cells {
    display: flex;
    gap: 3px;
}
.cells span {
    border-top: 1px solid #aaa;
    padding: 0 3px;
}
```
